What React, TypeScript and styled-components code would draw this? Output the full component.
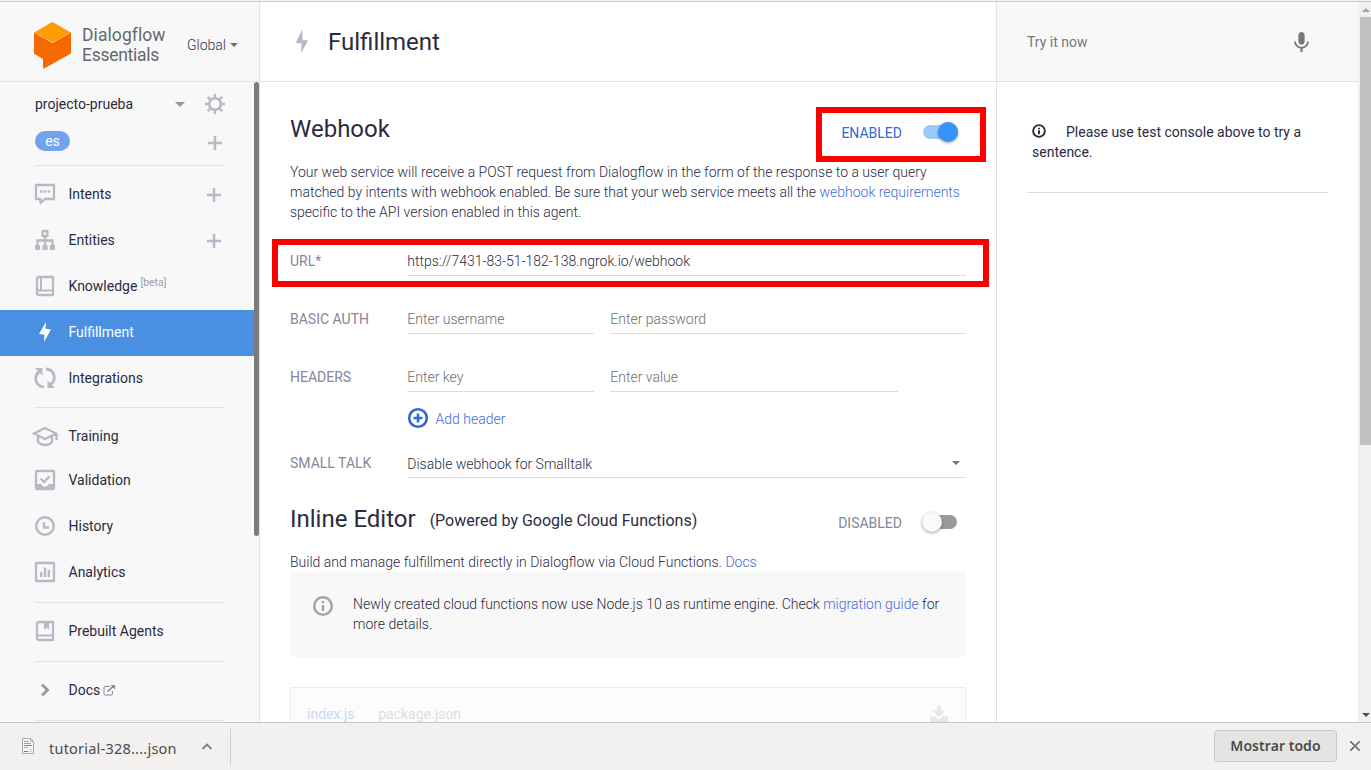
import React from "react";
import styled, { createGlobalStyle } from "styled-components";
import { MdMic } from "react-icons/md";

const Global = createGlobalStyle`
  * { box-sizing: border-box; }
  html, body { margin: 0; padding: 0; overflow: hidden; }
  body { font-family: Roboto, sans-serif; font-size: 14px; color: #2b2b3f; background: #fff; }
  button, input { font: inherit; }
`;

const muted = "#b8b8c6";
const line = "#e3e3e3";

const Window = styled.div`
  width: 1371px;
  height: 770px;
  display: flex;
  flex-direction: column;
  overflow: hidden;
`;
const TopEdge = styled.div`
  flex: none;
  height: 2px;
  background: #f2f1f0;
  border-bottom: 1px solid #cdcdcb;
`;
const Page = styled.div`
  flex: 1;
  min-height: 0;
  display: flex;
  overflow: hidden;
`;

/* Sidebar */
const Sidebar = styled.aside`
  width: 260px;
  flex: none;
  display: flex;
  flex-direction: column;
  background: #f8f8f8;
  border-right: 1px solid ${line};
`;
const Brand = styled.div`
  flex: none;
  height: 80px;
  display: flex;
  padding: 20px 0 0 33px;
  border-bottom: 1px solid ${line};
`;
const BrandName = styled.div`
  width: 105px;
  margin: 3px 0 0 10px;
  font-size: 17.5px;
  line-height: 20px;
  color: #64686d;
  white-space: nowrap;
`;
const BrandLine = styled.div<{ $spacing: number }>`
  letter-spacing: ${(p) => p.$spacing}px;
`;
const Region = styled.div`
  display: flex;
  gap: 4px;
  padding-top: 15px;
  font-weight: 300;
  line-height: 16px;
  color: #333347;
`;
const CaretSlot = styled.span`
  display: flex;
  height: 16px;
`;
const Caret = styled.span<{ $size: number; $color: string }>`
  align-self: center;
  border: ${(p) => p.$size}px solid transparent;
  border-top-color: ${(p) => p.$color};
  border-bottom: 0;
`;
const SideScroll = styled.div`
  display: flex;
  flex: 1;
  min-height: 0;
`;
const SideContent = styled.div`
  flex: 1;
  min-width: 0;
`;
const SideThumb = styled.div`
  width: 5px;
  height: 454px;
  border-radius: 3px;
  background: #7b7b7b;
`;
const Project = styled.div`
  display: flex;
  align-items: center;
  height: 44px;
  padding: 0 28px 0 35px;
`;
const ProjectName = styled.span`
  flex: 1;
`;
const GearSlot = styled.span`
  display: flex;
  margin-left: 19px;
`;
const Language = styled.div`
  display: flex;
  justify-content: space-between;
  height: 39px;
  padding: 5px 32px 0 35px;
`;
const Pill = styled.span`
  width: 35px;
  height: 20px;
  border-radius: 10px;
  background: #73a3ec;
  color: #fff;
  line-height: 20px;
  text-align: center;
`;
const PlusSlot = styled.span`
  display: flex;
  padding-top: 5px;
`;
const Divider = styled.div<{ $top?: number; $bottom?: number }>`
  height: 1px;
  margin: ${(p) => p.$top ?? 0}px 30px ${(p) => p.$bottom ?? 0}px 35px;
  background: ${line};
`;
const NavItem = styled.div<{ $active?: boolean; $height?: number; $lift?: number }>`
  display: flex;
  align-items: center;
  height: ${(p) => p.$height ?? 46}px;
  padding: 0 33px ${(p) => p.$lift ?? 0}px 32px;
  background: ${(p) => (p.$active ? "#4a90e2" : "transparent")};
  color: ${(p) => (p.$active ? "#fff" : "#2b2b3f")};
`;
const NavIcon = styled.span`
  width: 26px;
  height: 24px;
  margin-right: 10.5px;
  display: flex;
  justify-content: center;
  color: ${muted};
`;
const NavLabel = styled.span`
  flex: 1;
  display: flex;
  align-items: center;
  white-space: nowrap;
`;
const Beta = styled.span`
  margin: -8px 0 0 3px;
  font-size: 10.5px;
  color: #9c9cac;
`;
const NavPlus = styled.span`
  display: flex;
  padding-top: 2px;
`;

/* Main column */
const Main = styled.main`
  width: 737px;
  flex: none;
  border-right: 1px solid ${line};
`;
const MainHeader = styled.header`
  display: flex;
  height: 80px;
  padding: 26px 0 0 30px;
  border-bottom: 1px solid ${line};
`;
const Title = styled.h1`
  margin: 0 0 0 14px;
  font-size: 24px;
  font-weight: 400;
  line-height: 28px;
`;
const Body = styled.div`
  width: 706px;
  padding: 33px 0 0 30px;
`;
const SectionHead = styled.div<{ $top?: number }>`
  display: flex;
  align-items: center;
  height: 28px;
  margin-top: ${(p) => p.$top ?? 0}px;
`;
const SectionTitle = styled.h2`
  margin: 0;
  font-size: 24px;
  font-weight: 400;
  line-height: 28px;
`;
const Powered = styled.span`
  margin: 3px 0 0 14px;
  font-size: 16px;
`;
const SwitchGroup = styled.div<{ $on?: boolean }>`
  margin: 7px ${(p) => (p.$on ? 8 : 9)}px 0 auto;
  display: flex;
  align-items: center;
`;
const SwitchText = styled.span<{ $on?: boolean }>`
  margin-right: ${(p) => (p.$on ? 21 : 20)}px;
  color: ${(p) => (p.$on ? "#3367d6" : "#85879a")};
`;
const Track = styled.span<{ $on?: boolean }>`
  width: 35px;
  height: 14px;
  margin-bottom: 2px;
  border-radius: 7px;
  display: flex;
  align-items: center;
  justify-content: ${(p) => (p.$on ? "flex-end" : "flex-start")};
  background: ${(p) => (p.$on ? "#9bc9fb" : "#9a9a9a")};
`;
const Knob = styled.span<{ $on?: boolean }>`
  width: 20px;
  height: 20px;
  flex: none;
  border-radius: 50%;
  background: ${(p) => (p.$on ? "#3793f7" : "#fafafa")};
  box-shadow: 0 1px 3px rgba(0, 0, 0, 0.4);
`;
const Text = styled.p<{ $top: number }>`
  margin: ${(p) => p.$top}px 0 0;
  font-weight: 300;
  line-height: 20px;
  color: #2b2b3f;
  white-space: nowrap;
`;
const Link = styled.span`
  color: #3f6be0;
`;
const FormRow = styled.div<{ $top: number }>`
  display: flex;
  height: 30px;
  margin-top: ${(p) => p.$top}px;
`;
const Label = styled.label`
  width: 117px;
  line-height: 30px;
  color: #85879a;
`;
const Field = styled.div<{ $width: number; $placeholder?: boolean; $drop?: number }>`
  width: ${(p) => p.$width}px;
  margin-right: 16px;
  border-bottom: 1px solid #dcdcdc;
  font-weight: 300;
  line-height: ${(p) => 30 + (p.$drop ?? 0)}px;
  color: ${(p) => (p.$placeholder ? "#6e6e6e" : "#2b2b3f")};
  display: flex;
  justify-content: space-between;
  padding: 0 6.5px 0 0.3px;
  &:last-child { margin-right: 0; }
`;
const AddHeader = styled.div`
  display: flex;
  align-items: center;
  gap: 6px;
  height: 24px;
  margin: 14px 0 0 115.5px;
  font-weight: 300;
  color: #3f6be0;
`;
const AddHeaderText = styled.span`
  padding-top: 2px;
`;
const Notice = styled.div`
  display: flex;
  height: 85px;
  padding: 22px 0 0 21px;
  background: #f8f8f8;
`;
const NoticeText = styled.p`
  margin: 0 0 0 18px;
  font-weight: 300;
  line-height: 20px;
`;
const Editor = styled.div`
  display: flex;
  height: 60px;
  margin-top: 30px;
  padding: 16px 17px 0 16px;
  border: 1px solid #ececec;
  background: #fcfcfc;
`;
const Tab = styled.span<{ $active?: boolean }>`
  margin-right: 23.5px;
  line-height: 21px;
  color: ${(p) => (p.$active ? "#cbd8f6" : "#dedede")};
`;
const DownloadSlot = styled.span`
  margin-left: auto;
  padding-top: 2px;
`;
const Highlight = styled.div<{ $x: number; $y: number; $w: number; $h: number }>`
  position: absolute;
  left: ${(p) => p.$x}px;
  top: ${(p) => p.$y}px;
  width: ${(p) => p.$w}px;
  height: ${(p) => p.$h}px;
  border: 6px solid #f00;
`;

/* Test console */
const Console = styled.section`
  flex: 1;
  min-width: 0;
`;
const ConsoleHead = styled.div`
  display: flex;
  justify-content: space-between;
  height: 80px;
  padding: 28px 44px 0 30px;
  background: #f8f8f8;
  border-bottom: 1px solid ${line};
  line-height: 24px;
  color: #777;
`;
const ConsoleHint = styled.div`
  margin: 0 30px;
  height: 111px;
  padding: 40px 5px 0;
  border-bottom: 1px solid #dcdcdc;
  line-height: 20px;
  svg { vertical-align: -2px; margin: 0 19px 0 -1px; }
`;
const Scrollbar = styled.div`
  width: 13px;
  flex: none;
  display: flex;
  flex-direction: column;
  align-items: flex-end;
  background: #f1f1f1;
`;
const ArrowCell = styled.span`
  height: 15px;
  width: 11px;
  display: flex;
  align-items: center;
  justify-content: center;
`;
const ScrollThumb = styled.div`
  width: 11px;
  height: 428px;
  margin-bottom: auto;
  background: #c1c1c1;
`;

/* Download shelf */
const Shelf = styled.footer`
  flex: none;
  height: 48px;
  display: flex;
  border-top: 1px solid #c9c8c6;
  background: #f2f1ef;
  font-family: "Noto Sans", "Open Sans", sans-serif;
  color: #4c4c4c;
`;
const Download = styled.div`
  display: flex;
  width: 231px;
  height: 36px;
  margin-top: 6px;
  padding: 8px 17px 0 21px;
  border-right: 1px solid #cfcecb;
`;
const FileName = styled.span`
  width: 152px;
  margin: 1px 0 0 14px;
  font-size: 14.5px;
  letter-spacing: 0.22px;
  line-height: 20px;
  white-space: nowrap;
`;
const ShowAll = styled.button`
  width: 123px;
  height: 32px;
  margin: 7px 12px 0 auto;
  padding: 0;
  border: 1px solid #c9c8c5;
  border-radius: 4px;
  background: #e5e4e2;
  color: #4c4c4c;
  font-size: 14px;
  font-weight: 600;
  letter-spacing: 0.05px;
  line-height: 28px;
`;
const CloseSlot = styled.span`
  padding: 17px 10px 0 0;
  display: flex;
`;

const Plus = () => (
  <svg width="14" height="14" viewBox="0 0 14 14" stroke={muted} strokeWidth="2.5">
    <path d="M0 7h14M7 0v14" />
  </svg>
);
const AddCircle = () => (
  <svg width="24" height="24" viewBox="0 0 24 24" fill="none" stroke="#3367d6" strokeWidth="2.600">
    <circle cx="12" cy="12" r="8.800" />
    <path d="M12 7.500v9M7.500 12h9" />
  </svg>
);
const InfoCircle = ({ size, color, weight }: { size: number; color: string; weight: number }) => (
  <svg width={size} height={size} viewBox="0 0 24 24" fill="none" stroke={color} strokeWidth={weight}>
    <circle cx="12" cy="12" r="8.800" />
    <path d="M12 7v2.300M12 11v6" />
  </svg>
);
const Logo = () => (
  <svg width="39" height="48" viewBox="0 0 39 48">
    <path d="M1 10.500v20c0 1 .3 1.400 1 1.800l8 4.700v8.500c0 1 .8 1.300 1.600.8L37 32c.7-.4 1-1 1-1.800V10.500L19.500 21z" fill="#f46a00" />
    <path d="M1.300 10.500 18.200.5c.8-.5 1.400-.5 2.200 0l17.300 10L19.500 20.500z" fill="#ff9d00" />
  </svg>
);
const Bolt = () => (
  <svg width="24" height="24" viewBox="0 0 24 24" fill="#fff">
    <path d="m13 2-7 12 5.500.8L11 22l7-12.500-5.500-.8z" />
  </svg>
);
const TitleBolt = () => (
  <svg width="24" height="28" viewBox="0 0 24 28" fill={muted}>
    <path d="M12.200 1.500 5.700 15l5.800.6-.6 9.700L18.200 12.600l-5.700-.8z" />
  </svg>
);
const Icon = styled.svg`
  flex: none;
  fill: none;
  stroke: currentColor;
`;
const Svg = ({ children, w = 24 }: { children: React.ReactNode; w?: number }) => (
  <Icon width={w} height="24" viewBox={`0 0 ${w} 24`} strokeWidth="2.300">
    {children}
  </Icon>
);
const Gear = () => (
  <svg width="22" height="22" viewBox="0 0 22 22" fill="none" stroke={muted}>
    <circle cx="11" cy="11" r="5.800" strokeWidth="2.600" />
    <path d="M11 1v4M11 17v4M1 11h4M17 11h4M3.900 3.900l2.900 2.900M15.200 15.200l2.900 2.900M3.900 18.100l2.900-2.900M15.200 6.800l2.900-2.900" strokeWidth="2.400" />
  </svg>
);

const icons: Record<string, React.ReactNode> = {
  Intents: (
    <Svg>
      <path d="M3 3h18v14H12l-4.500 4v-4H3z" strokeLinejoin="round" />
      <path d="M7 9.500h2.400M10.800 9.500h2.400M14.600 9.500H17" />
    </Svg>
  ),
  Entities: (
    <Svg>
      <rect x="9.500" y="3" width="5" height="5" rx=".5" />
      <path d="M12 8v9M4.500 17v-4.500h15V17" />
      <g fill="currentColor" stroke="none">
        <rect x="2" y="17" width="5.200" height="5" rx="1" />
        <rect x="9.400" y="17" width="5.200" height="5" rx="1" />
        <rect x="16.800" y="17" width="5.200" height="5" rx="1" />
      </g>
    </Svg>
  ),
  Knowledge: (
    <Svg>
      <path d="M20 3v18H6a2 2 0 0 1-2-2V5a2 2 0 0 1 2-2z" strokeLinejoin="round" />
      <path d="M8 3v13M4.500 16.500H20" strokeWidth="2" />
    </Svg>
  ),
  Fulfillment: <Bolt />,
  Integrations: (
    <Svg>
      <path d="M11 21A8.500 8.500 0 0 1 6.500 5.500M13 3a8.500 8.500 0 0 1 4.500 15.500" strokeWidth="2.800" />
      <path d="M2 2h7.500v7.500zM22 22h-7.500v-7.500z" fill="currentColor" stroke="none" />
    </Svg>
  ),
  Training: (
    <Svg w={26}>
      <path d="M2 9.500 13 4l11 5.500L13 15zM6 12v6c3.500 4 10.500 4 14 0v-6M24.500 9.500V16" />
    </Svg>
  ),
  Validation: (
    <Svg>
      <rect x="3" y="3" width="18" height="18" rx="1" />
      <path d="M3 16h5.200a4 4 0 0 0 7.600 0H21v5H3z" fill="currentColor" stroke="none" />
      <path d="m7.500 10.500 3.500 3.500 5.500-5.800" />
    </Svg>
  ),
  History: (
    <Svg>
      <circle cx="12" cy="12" r="8.800" strokeWidth="2.400" />
      <path d="M11 8v5.500h5" />
    </Svg>
  ),
  Analytics: (
    <Svg>
      <rect x="3" y="3" width="18" height="18" rx=".5" />
      <path d="M8.200 12v5M12 7.500V17M15.800 10v7" />
    </Svg>
  ),
  "Prebuilt Agents": (
    <Svg>
      <path d="M20 3v18H6a2 2 0 0 1-2-2V5a2 2 0 0 1 2-2z" strokeLinejoin="round" />
      <path d="M4.500 16.500H20" strokeWidth="2" />
      <path d="M11 3h5v8l-2.500-2.200L11 11z" fill="currentColor" stroke="none" />
    </Svg>
  ),
  Docs: (
    <Svg>
      <path d="m9 6.500 5.500 5.500L9 17.500" stroke="#9999ab" strokeWidth="2.900" />
    </Svg>
  ),
};

interface NavProps {
  name: string;
  active?: boolean;
  plus?: boolean;
  height?: number;
  lift?: number;
  extra?: React.ReactNode;
}
const Nav = ({ name, active, plus, height, lift, extra }: NavProps) => (
  <NavItem $active={active} $height={height} $lift={lift}>
    <NavIcon>{icons[name]}</NavIcon>
    <NavLabel>
      {name}
      {extra}
    </NavLabel>
    {plus && (
      <NavPlus>
        <Plus />
      </NavPlus>
    )}
  </NavItem>
);

const Toggle = ({ on }: { on?: boolean }) => (
  <SwitchGroup $on={on}>
    <SwitchText $on={on}>{on ? "ENABLED" : "DISABLED"}</SwitchText>
    <Track $on={on}>
      <Knob $on={on} />
    </Track>
  </SwitchGroup>
);

const ExternalIcon = styled.svg`
  margin-left: 3px;
  fill: none;
  stroke: #85858f;
`;

export default function App() {
  return (
    <Window>
      <Global />
      <TopEdge />
      <Page>
        <Sidebar>
          <Brand>
            <Logo />
            <BrandName>
              <BrandLine $spacing={0.08}>Dialogflow</BrandLine>
              <BrandLine $spacing={-0.28}>Essentials</BrandLine>
            </BrandName>
            <Region>
              Global
              <CaretSlot>
                <Caret $size={4} $color="#6e6e78" />
              </CaretSlot>
            </Region>
          </Brand>
          <SideScroll>
            <SideContent>
              <Project>
                <ProjectName>projecto-prueba</ProjectName>
                <Caret $size={5} $color="#9494a6" />
                <GearSlot>
                  <Gear />
                </GearSlot>
              </Project>
              <Language>
                <Pill>es</Pill>
                <PlusSlot>
                  <Plus />
                </PlusSlot>
              </Language>
              <Divider $bottom={6} />
              <Nav name="Intents" plus lift={2} />
              <Nav name="Entities" plus lift={2} />
              <Nav name="Knowledge" lift={2} extra={<Beta>[beta]</Beta>} />
              <Nav name="Fulfillment" active lift={2} />
              <Nav name="Integrations" lift={2} />
              <Divider $top={5} $bottom={6} />
              <Nav name="Training" height={43} />
              <Nav name="Validation" />
              <Nav name="History" />
              <Nav name="Analytics" />
              <Divider $top={7} $bottom={5} />
              <Nav name="Prebuilt Agents" />
              <Divider $top={7} $bottom={5} />
              <Nav
                name="Docs"
                extra={
                  <ExternalIcon width="13" height="12" viewBox="0 0 13 12">
                    <path d="M6.500 2.500H2.200A1.200 1.200 0 0 0 1 3.700v6A1.200 1.200 0 0 0 2.200 11h6a1.200 1.200 0 0 0 1.200-1.200V7" />
                    <path d="M4.500 7.500 10 2.500" strokeWidth="1.600" />
                    <path d="M7.500 1H12v4.500z" fill="#85858f" stroke="none" />
                  </ExternalIcon>
                }
              />
              <Divider $top={7} />
            </SideContent>
            <SideThumb />
          </SideScroll>
        </Sidebar>

        <Main>
          <MainHeader>
            <TitleBolt />
            <Title>Fulfillment</Title>
          </MainHeader>
          <Body>
            <SectionHead>
              <SectionTitle>Webhook</SectionTitle>
              <Toggle on />
            </SectionHead>
            <Text $top={19}>
              Your web service will receive a POST request from Dialogflow in the form of the response to a user query
              <br />
              matched by intents with webhook enabled. Be sure that your web service meets all the <Link>webhook requirements</Link>
              <br />
              specific to the API version enabled in this agent.
            </Text>
            <FormRow $top={24}>
              <Label>URL*</Label>
              <Field $width={559}>https://7431-83-51-182-138.ngrok.io/webhook</Field>
            </FormRow>
            <FormRow $top={28}>
              <Label>BASIC AUTH</Label>
              <Field $width={187} $placeholder>Enter username</Field>
              <Field $width={356} $placeholder>Enter password</Field>
            </FormRow>
            <FormRow $top={28}>
              <Label>HEADERS</Label>
              <Field $width={187} $placeholder>Enter key</Field>
              <Field $width={288} $placeholder>Enter value</Field>
            </FormRow>
            <AddHeader>
              <AddCircle />
              <AddHeaderText>Add header</AddHeaderText>
            </AddHeader>
            <FormRow $top={18}>
              <Label>SMALL TALK</Label>
              <Field $width={559} $drop={2}>
                Disable webhook for Smalltalk
                <Caret $size={4} $color="#737373" />
              </Field>
            </FormRow>
            <SectionHead $top={27}>
              <SectionTitle>Inline Editor</SectionTitle>
              <Powered>(Powered by Google Cloud Functions)</Powered>
              <Toggle />
            </SectionHead>
            <Text $top={19}>
              Build and manage fulfillment directly in Dialogflow via Cloud Functions. <Link>Docs</Link>
            </Text>
            <Notice>
              <InfoCircle size={24} color="#a3a3a9" weight={2.5} />
              <NoticeText>
                Newly created cloud functions now use Node.js 10 as runtime engine. Check <Link>migration guide</Link> for
                <br />
                more details.
              </NoticeText>
            </Notice>
            <Editor>
              <Tab $active>index.js</Tab>
              <Tab>package.json</Tab>
              <DownloadSlot>
                <svg width="18" height="16" viewBox="0 0 18 16" fill="#e6e6e6">
                  <path d="M7 0h4v5h4L9 11 3 5h4zM1 10.500h4l4 3 4-3h4a1 1 0 0 1 1 1V15a1 1 0 0 1-1 1H1a1 1 0 0 1-1-1v-3.500a1 1 0 0 1 1-1z" />
                </svg>
              </DownloadSlot>
            </Editor>
          </Body>
        </Main>

        <Console>
          <ConsoleHead>
            Try it now
            <MdMic size={25} />
          </ConsoleHead>
          <ConsoleHint>
            <InfoCircle size={16} color="#2b2b3f" weight={2.9} />
            Please use test console above to try a sentence.
          </ConsoleHint>
        </Console>
        <Scrollbar>
          <ArrowCell>
            <svg width="8" height="4" viewBox="0 0 8 4" fill="#a3a3a3">
              <path d="M4 0 8 4H0z" />
            </svg>
          </ArrowCell>
          <ScrollThumb />
          <ArrowCell>
            <svg width="8" height="4" viewBox="0 0 8 4" fill="#505050">
              <path d="M0 0h8L4 4z" />
            </svg>
          </ArrowCell>
        </Scrollbar>
      </Page>

      <Shelf>
        <Download>
          <svg width="14" height="18" viewBox="0 0 14 18">
            <path d="M1.500 1.500h8l3 3v12h-11z" fill="#f6f6f6" stroke="#a9a9a9" />
            <path d="M9.500 1.500v3h3" fill="none" stroke="#b5b5b5" />
            <path d="M3 4.500h5M3 6.500h7" stroke="#8ba6c4" />
            <path d="M3 8.500h8" stroke="#b56bb0" />
            <path d="M3 10.500h4" stroke="#8bbf8b" />
            <path d="M3 14.500h4" stroke="#d0506a" />
            <path d="M8 12.500h3M8 14.500h3" stroke="#c5c5c5" />
          </svg>
          <FileName>tutorial-328....json</FileName>
          <svg width="12" height="18" viewBox="0 0 12 18" fill="none" stroke="#808080" strokeWidth="1.800">
            <path d="m1.500 12 4.500-4.500 4.500 4.500" />
          </svg>
        </Download>
        <ShowAll>Mostrar todo</ShowAll>
        <CloseSlot>
          <svg width="12" height="12" viewBox="0 0 12 12" stroke="#777" strokeWidth="1.900">
            <path d="m1.300 1.300 9.400 9.400M10.700 1.300l-9.400 9.400" />
          </svg>
        </CloseSlot>
      </Shelf>
      <Highlight $x={816} $y={107} $w={170} $h={55} />
      <Highlight $x={272} $y={239} $w={717} $h={48} />
    </Window>
  );
}
